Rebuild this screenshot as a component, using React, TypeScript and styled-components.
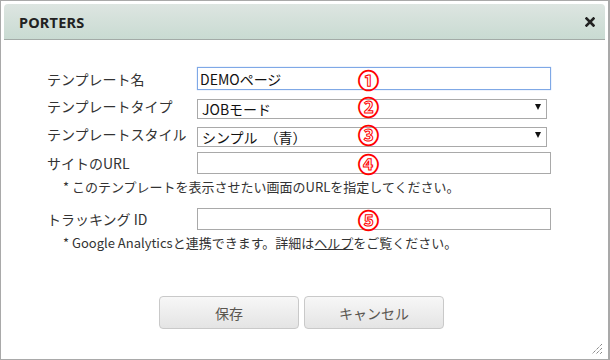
import styled, { createGlobalStyle } from "styled-components"

const GlobalStyle = createGlobalStyle`
  html, body {
    margin: 0;
    padding: 0;
    background: #fff;
  }
  body {
    font-family: "Noto Sans CJK JP", "Noto Sans", sans-serif;
    color: #333;
  }
`

interface FieldProps {
  mark: string
}

export default function App() {
  return (
    <>
      <GlobalStyle />
      <Dialog>
        <TitleBar>
          <Title>PORTERS</Title>
          <CloseBtn aria-label="close">
            <svg width="10" height="10" viewBox="0 0 10 10">
              <path d="M1.5 1.5 L8.5 8.5 M8.5 1.5 L1.5 8.5" stroke="#222" strokeWidth="2.6" strokeLinecap="square" />
            </svg>
          </CloseBtn>
        </TitleBar>
        <Body>
          <Row>
            <Label>テンプレート名</Label>
            <Field mark="①">
              <TextInput $active $height={23} defaultValue="DEMOページ" />
            </Field>
          </Row>
          <Row $gap={6}>
            <Label>テンプレートタイプ</Label>
            <Field mark="②">
              <SelectBox>
                <Select defaultValue="job">
                  <option value="job">JOBモード</option>
                </Select>
                <Arrow />
              </SelectBox>
            </Field>
          </Row>
          <Row $gap={8}>
            <Label>テンプレートスタイル</Label>
            <Field mark="③">
              <SelectBox>
                <Select defaultValue="blue">
                  <option value="blue">シンプル　（青）</option>
                </Select>
                <Arrow />
              </SelectBox>
            </Field>
          </Row>
          <Row $gap={8}>
            <Label>サイトのURL</Label>
            <Field mark="④">
              <TextInput $height={22} />
            </Field>
          </Row>
          <Hint>* このテンプレートを表示させたい画面のURLを指定してください。</Hint>
          <Row $gap={12}>
            <Label>トラッキング ID</Label>
            <Field mark="⑤">
              <TextInput $height={22} />
            </Field>
          </Row>
          <Hint>* Google Analyticsと連携できます。詳細は<HelpLink>ヘルプ</HelpLink>をご覧ください。</Hint>
        </Body>
        <ButtonPane>
          <Button>保存</Button>
          <Button>キャンセル</Button>
        </ButtonPane>
        <Grip>
          <svg width="12" height="12" viewBox="0 0 12 12">
            <path d="M11 1 L1 11 M11 5 L5 11 M11 9 L9 11" stroke="#555" strokeWidth="1" strokeDasharray="1 1" />
          </svg>
        </Grip>
      </Dialog>
    </>
  )
}

function Field({ mark, children }: FieldProps & { children: React.ReactNode }) {
  return (
    <FieldWrap>
      {children}
      <Mark>{mark}</Mark>
    </FieldWrap>
  )
}

const Dialog = styled.div`
  position: relative;
  width: 610px;
  height: 360px;
  box-sizing: border-box;
  border: 1px solid #a9a9a9;
  border-right-width: 2px;
  padding: 3px;
  background: #fff;
  display: flex;
  flex-direction: column;
  overflow: hidden;
`
const TitleBar = styled.div`
  height: 35px;
  display: flex;
  align-items: center;
  justify-content: space-between;
  padding: 0 10px 0 15px;
  border-radius: 4px 4px 0 0;
  border-bottom: 1px solid #a3aba7;
  background: linear-gradient(#dde5e1, #c9dbd2);
`
const Title = styled.div`
  font-family: "Noto Sans", sans-serif;
  font-weight: 700;
  font-size: 14.5px;
  color: #222;
  letter-spacing: 0.2px;
`
const CloseBtn = styled.div`
  width: 10px;
  height: 10px;
  display: flex;
  margin-top: 1px;
  cursor: pointer;
`
const Body = styled.div`
  padding: 27px 0 0 43px;
  display: flex;
  flex-direction: column;
`
const Row = styled.div<{ $gap?: number }>`
  display: flex;
  align-items: center;
  margin-top: ${p => p.$gap ?? 0}px;
`
const Label = styled.div`
  width: 150px;
  font-size: 14px;
  line-height: 20px;
  color: #333;
  white-space: nowrap;
`
const FieldWrap = styled.div`
  position: relative;
  display: flex;
`
const TextInput = styled.input<{ $active?: boolean; $height: number }>`
  width: 354px;
  height: ${p => p.$height}px;
  box-sizing: border-box;
  padding: 0 2px;
  border: 1px solid ${p => (p.$active ? "#7fa8e6" : "#a9a9a9")};
  box-shadow: ${p => (p.$active ? "0 0 1px #9dbdf0" : "none")};
  font-family: "Noto Sans CJK JP", sans-serif;
  font-size: 14px;
  color: #111;
  outline: none;
  background: #fff;
`
const SelectBox = styled.div`
  position: relative;
  width: 350px;
  height: 20px;
`
const Select = styled.select`
  appearance: none;
  width: 100%;
  height: 100%;
  box-sizing: border-box;
  border: 1px solid #a9a9a9;
  border-radius: 0;
  padding: 0 0 0 4px;
  background: #fff;
  font-family: "Noto Sans CJK JP", sans-serif;
  font-size: 14px;
  line-height: 18px;
  color: #111;
  outline: none;
`
const Arrow = styled.span`
  position: absolute;
  right: 6px;
  top: 8px;
  width: 0;
  height: 0;
  border-left: 3.5px solid transparent;
  border-right: 3.5px solid transparent;
  border-top: 6px solid #111;
  pointer-events: none;
`
const Mark = styled.span`
  position: absolute;
  left: 161px;
  top: 50%;
  transform: translateY(-50%);
  font-family: "Noto Sans CJK JP", sans-serif;
  font-weight: 700;
  font-size: 21px;
  line-height: 22px;
  color: #fff;
  -webkit-text-stroke: 1px #f00;
  pointer-events: none;
`
const Hint = styled.div`
  margin: 4px 0 0 16px;
  font-size: 13px;
  line-height: 18px;
  color: #333;
  white-space: nowrap;
`
const HelpLink = styled.a`
  color: #333;
  text-decoration: underline;
  cursor: pointer;
`
const ButtonPane = styled.div`
  display: flex;
  justify-content: center;
  gap: 5px;
  margin-top: 44px;
  padding-right: 6px;
`
const Button = styled.button`
  width: 140px;
  height: 33px;
  border: 1px solid #c9c9c9;
  border-radius: 4px;
  background: linear-gradient(#f7f7f7, #e4e4e4);
  font-family: "Noto Sans CJK JP", sans-serif;
  font-size: 14px;
  color: #5a5650;
  cursor: pointer;
`
const Grip = styled.div`
  position: absolute;
  right: 5px;
  bottom: 4px;
  width: 12px;
  height: 12px;
  display: flex;
`
